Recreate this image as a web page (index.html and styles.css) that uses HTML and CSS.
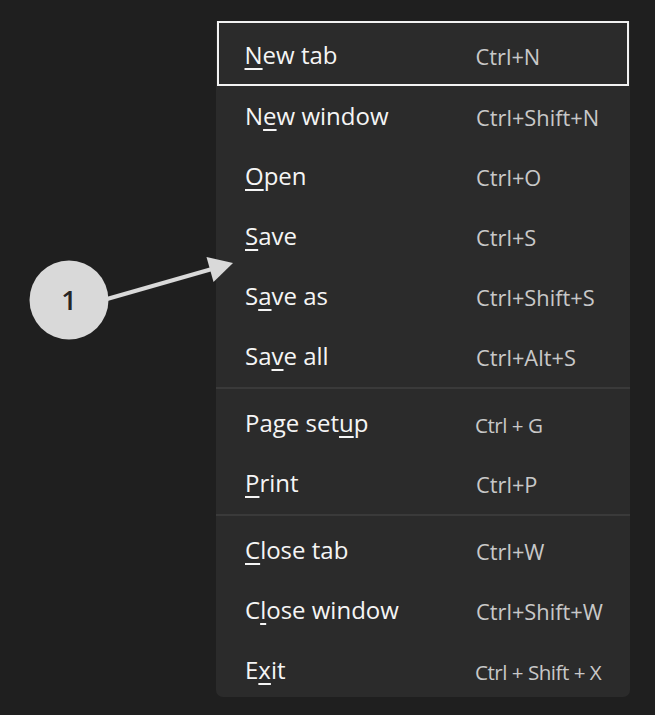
FILE: index.html
```html
<!DOCTYPE html>
<html>
<head>
<meta charset="utf-8">
<link rel="stylesheet" href="styles.css">
</head>
<body>
<div class="stage">
  <div class="menu">
    <div class="item focused"><span class="label"><u>N</u>ew tab</span><span class="key">Ctrl+N</span></div>
    <div class="item"><span class="label">N<u>e</u>w window</span><span class="key">Ctrl+Shift+N</span></div>
    <div class="item"><span class="label"><u>O</u>pen</span><span class="key">Ctrl+O</span></div>
    <div class="item"><span class="label"><u>S</u>ave</span><span class="key">Ctrl+S</span></div>
    <div class="item"><span class="label">S<u>a</u>ve as</span><span class="key">Ctrl+Shift+S</span></div>
    <div class="item"><span class="label">Sa<u>v</u>e all</span><span class="key">Ctrl+Alt+S</span></div>
    <div class="sep"></div>
    <div class="item"><span class="label">Page set<u>u</u>p</span><span class="key spaced">Ctrl + G</span></div>
    <div class="item"><span class="label"><u>P</u>rint</span><span class="key">Ctrl+P</span></div>
    <div class="sep"></div>
    <div class="item"><span class="label"><u>C</u>lose tab</span><span class="key">Ctrl+W</span></div>
    <div class="item"><span class="label">C<u>l</u>ose window</span><span class="key">Ctrl+Shift+W</span></div>
    <div class="item last"><span class="label">E<u>x</u>it</span><span class="key spaced">Ctrl + Shift + X</span></div>
  </div>
  <div class="callout">
    <svg width="260" height="360" viewBox="0 0 260 360">
      <line x1="100" y1="301" x2="212" y2="269" stroke="#d9d9d9" stroke-width="4"/>
      <polygon points="233,263 206.5,257 213.5,282" fill="#d9d9d9"/>
      <circle cx="69" cy="300" r="39.5" fill="#d9d9d9"/>
      <text x="69" y="310" text-anchor="middle" class="num">1</text>
    </svg>
  </div>
</div>
</body>
</html>
```
FILE: styles.css
```css
html, body {
  margin: 0;
  padding: 0;
  background: #1f1f1f;
  width: 655px;
  height: 715px;
  overflow: hidden;
}
.stage {
  position: relative;
  width: 655px;
  height: 715px;
  padding: 21px 0 0 216px;
  box-sizing: border-box;
  font-family: "Open Sans", "Noto Sans", sans-serif;
}
.menu {
  width: 414px;
  background: #2b2b2b;
  border-radius: 0 0 7px 7px;
  display: flex;
  flex-direction: column;
}
.item {
  display: grid;
  grid-template-columns: 231px 1fr;
  align-items: start;
  height: 60px;
  padding-left: 29px;
  box-sizing: border-box;
  line-height: 60px;
}
.item.focused {
  height: 65px;
  margin: 0 1px;
  padding-left: 25.5px;
  border: 2.5px solid #f2f2f2;
  line-height: 60px;
  padding-top: 2px;
}
.item.last {
  height: 57px;
}
.label {
  color: #f5f5f5;
  font-size: 24px;
  white-space: nowrap;
}
.label u {
  text-decoration-thickness: 2px;
  text-underline-offset: 4px;
}
.key {
  color: #c8c8c8;
  font-size: 21.8px;
  white-space: nowrap;
  padding-top: 2px;
}
.key.spaced {
  margin-left: -1px;
  font-size: 20.6px;
  letter-spacing: -0.5px;
}
.sep {
  height: 2px;
  background: #3a3a3a;
  margin: 1px 0 4px;
}
.callout {
  position: absolute;
  left: 0;
  top: 0;
  pointer-events: none;
}
.callout svg {
  display: block;
}
.num {
  font-family: "Open Sans", sans-serif;
  font-size: 27px;
  font-weight: 600;
  fill: #262626;
}
```
